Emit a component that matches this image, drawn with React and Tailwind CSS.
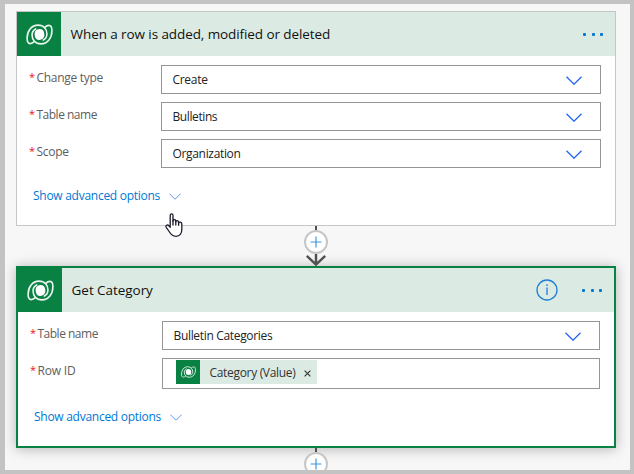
const Logo = ({ className }) => (
  <svg viewBox="0 0 28 22" fill="none" stroke="#e9f5ee" strokeLinecap="round" strokeLinejoin="round" className={className}>
    <path d="M8.500 18.500C7 20 5.500 20.500 4.200 20.500C2 20.500 1 18.500 1 15C1 7.500 5.500 1.200 12.500 1.200C18.500 1.200 21.800 5.500 21.800 10.500C21.800 13.500 20.500 15.500 18 16.800" strokeWidth="1.700" />
    <path d="M19.500 3.500C21 2 22.500 1.500 23.800 1.500C26 1.500 27 3.500 27 7C27 14.500 22.500 20.800 15.500 20.800C9.500 20.800 6.200 16.500 6.200 11.500C6.200 8.500 7.500 6.500 10 5.200" strokeWidth="1.700" />
    <path d="M9.300 13C7.800 8.500 10.500 5.300 14.200 5.300C17 5.300 18.500 7 18.700 9C20.200 13.500 17.500 16.700 13.800 16.700C11 16.700 9.500 15 9.300 13Z" fill="#fff" stroke="none" />
  </svg>
);

const Chevron = ({ className }) => (
  <svg viewBox="0 0 16 9" fill="none" stroke="currentColor" strokeWidth="1.3" className={className}>
    <path d="M.5.7 8 8.2 15.5.7" />
  </svg>
);

const Dots = () => (
  <div className="flex w-[20px] justify-between text-[#0078d4]">
    <i className="size-[3px] rounded-[1px] bg-current" />
    <i className="size-[3px] rounded-[1px] bg-current" />
    <i className="size-[3px] rounded-[1px] bg-current" />
  </div>
);

const Header = ({ title, titleClass, children }) => (
  <div className="flex h-11 items-center bg-[#dbebe3]">
    <div className="flex size-11 items-center justify-center bg-[#088142]">
      <Logo className="h-[21px] w-[27px]" />
    </div>
    <h2 className={`ml-[9.600px] flex-1 text-[13.5px] leading-5 text-[#111] ${titleClass}`}>{title}</h2>
    {children}
  </div>
);

const Label = ({ children, className }) => (
  <div className="flex w-[132px] shrink-0 pt-[5px] text-[12px] leading-4 text-[#605e5c]">
    <span className="w-[7.500px] text-[11px] leading-[14px] text-[#e81123]">*</span>
    <span className={className}>{children}</span>
  </div>
);

const Select = ({ label, labelClass, value, valueClass }) => (
  <div className="flex h-[29px]">
    <Label className={labelClass}>{label}</Label>
    <div className="flex flex-1 items-center justify-between border border-[#979593] pt-px pr-[18.500px] pl-[10.5px] text-[12px] leading-4 text-[#222]">
      <span className={valueClass}>{value}</span>
      <Chevron className="h-[9px] w-4 text-[#2266f5]" />
    </div>
  </div>
);

const Advanced = ({ className }) => (
  <div className={`flex items-center text-[12px] leading-4 text-[#0078d4] ${className}`}>
    <span className="tracking-[-0.27px]">Show advanced options</span>
    <Chevron className="ml-[9px] h-[7px] w-3 text-[#5b93ec]" />
  </div>
);

const Plus = () => (
  <div className="flex size-6 shrink-0 items-center justify-center rounded-full border-2 border-[#c6c6c6] bg-white">
    <svg viewBox="0 0 12 12" className="size-3" stroke="#3d96dd" strokeWidth="1.2">
      <path d="M6 .5v11M.5 6h11" />
    </svg>
  </div>
);

export default function App() {
  return (
    <main className="relative h-[474px] w-[634px] overflow-hidden border-4 border-l-[5px] border-[#c3c3c3] bg-[#f7f7f7] pt-[7px] pl-[11px] font-['Open_Sans','Noto_Sans',sans-serif]">
      <section className="h-[215px] w-[600px] border border-[#c6c6c6] bg-white">
        <Header title="When a row is added, modified or deleted" titleClass="tracking-[-0.09px]">
          <div className="mr-[12px]"><Dots /></div>
        </Header>
        <div className="flex flex-col gap-2 pt-[9px] pr-[14px] pl-3">
          <Select label="Change type" labelClass="tracking-[-0.3px]" value="Create" valueClass="tracking-[-0.3px]" />
          <Select label="Table name" labelClass="tracking-[-0.5px]" value="Bulletins" valueClass="tracking-[-0.4px]" />
          <Select label="Scope" labelClass="tracking-[-0.3px]" value="Organization" valueClass="tracking-[-0.33px]" />
        </div>
        <Advanced className="mt-5 ml-4" />
      </section>

      <div className="flex h-10 w-[600px] flex-col items-center">
        <div className="h-1 w-[2px] bg-[#505050]" />
        <Plus />
        <svg viewBox="0 0 22 12" className="h-3 w-[22px]" fill="none" stroke="#505050" strokeWidth="2.4">
          <path d="M11 0v11M1.8 1.8 11 10.6 20.2 1.8" />
        </svg>
      </div>

      <section className="h-[182px] w-[600px] border-2 border-[#088142] bg-white shadow-[0_1px_12px_rgba(0,0,0,0.28)]">
        <Header title="Get Category" titleClass="tracking-[-0.05px]">
          <svg viewBox="0 0 22 22" className="mr-[24px] size-[22px]" fill="none" stroke="#1f7fd6" strokeWidth="1.3">
            <circle cx="11" cy="11" r="10" />
            <path d="M11 8.5v7.5M11 5.3v1.6" />
          </svg>
          <div className="mr-[12px]"><Dots /></div>
        </Header>
        <div className="flex flex-col gap-2 pt-[9px] pr-[14px] pl-3">
          <Select label="Table name" labelClass="tracking-[-0.5px]" value="Bulletin Categories" valueClass="tracking-[-0.33px]" />
          <div className="flex h-[31px]">
            <Label className="tracking-[-0.2px]">Row ID</Label>
            <div className="flex-1 border border-[#979593] pt-px pl-[13px]">
              <div className="flex h-6 w-[141px] items-center bg-[#dbebe3] text-[12px] leading-4 text-[#333]">
                <div className="flex size-6 items-center justify-center bg-[#088142]">
                  <Logo className="h-3 w-[15px]" />
                </div>
                <span className="ml-[9.5px] flex-1 pt-px tracking-[-0.32px] whitespace-nowrap">Category (Value)</span>
                <svg viewBox="0 0 8 8" className="mt-[3px] mr-[6px] size-[7px]" stroke="#333" strokeWidth="1.3">
                  <path d="M.7.7l6.600 6.600M7.300.7.7 7.300" />
                </svg>
              </div>
            </div>
          </div>
        </div>
        <Advanced className="mt-5 ml-4" />
      </section>

      <div className="flex w-[600px] flex-col items-center">
        <div className="h-1 w-[2px] bg-[#505050]" />
        <Plus />
      </div>

      <svg viewBox="0 0 18 24" className="absolute top-[209px] left-[160px] h-6 w-[18px]" fill="#fff" stroke="#1b1b2b" strokeWidth="1.3" strokeLinejoin="round" strokeLinecap="round">
        <path d="M5.2 14.2V2.3C5.2.4 8 .4 8 2.3V8C8.200 6 10.800 6.200 10.800 8V8.800C11.200 7.200 13.600 7.400 13.600 9.200V10C14.200 8.600 16.800 8.800 16.800 11V16.500C16.800 20.500 14.800 23.300 11 23.300C7.500 23.300 6 21.500 4.500 19L1.200 14.300C.2 12.500 2.600 11.300 3.800 12.700Z" />
        <path d="M8 7.500V12M10.800 8.500V12M13.600 9.500V12.300" />
      </svg>
    </main>
  );
}
